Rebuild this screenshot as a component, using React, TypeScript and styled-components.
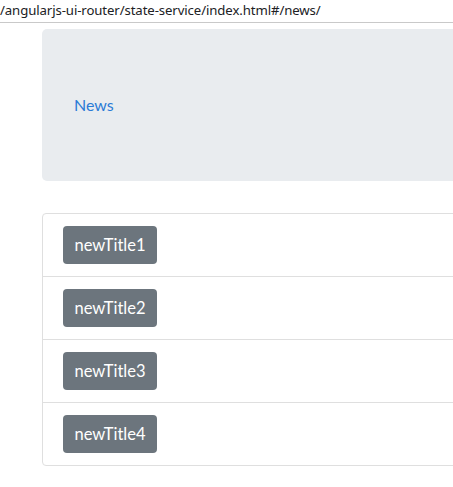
import React from "react";
import styled, { createGlobalStyle } from "styled-components";

const Global = createGlobalStyle`
  html, body { margin: 0; padding: 0; background: #fff; overflow: hidden; }
  body { font-family: Lato, "Open Sans", sans-serif; }
`;

const Page = styled.div`
  width: 453px;
  height: 487px;
  overflow: hidden;
  display: flex;
  flex-direction: column;
`;

const AddressBar = styled.div`
  height: 22px;
  flex: none;
  border-bottom: 1px solid #c9c9c9;
  font-family: "Noto Sans", "Open Sans", sans-serif;
  font-size: 13.2px;
  line-height: 20px;
  color: #202124;
  white-space: nowrap;
  padding-left: 0;
  letter-spacing: -0.1px;
`;

const Container = styled.div`
  margin: 6px -40px 0 42px;
  display: flex;
  flex-direction: column;
`;

const Jumbotron = styled.div`
  background: #e9ecef;
  border-radius: 5px;
  padding: 64px 32px;
  margin-bottom: 32px;
`;

const Link = styled.a`
  font-size: 16px;
  line-height: 24px;
  color: #2b7bd6;
  text-decoration: none;
`;

const ListGroup = styled.ul`
  list-style: none;
  margin: 0;
  padding: 0;
  border: 1px solid #dfdfdf;
  border-radius: 4px;
`;

const ListItem = styled.li<{ $last?: boolean }>`
  padding: 12px 20px;
  border-bottom: ${(p) => (p.$last ? "none" : "1px solid #dfdfdf")};
  display: flex;
`;

const Button = styled.button`
  background: #6c757d;
  color: #fff;
  border: none;
  border-radius: 4px;
  width: 94px;
  height: 38px;
  padding: 0;
  font-family: Lato, "Open Sans", sans-serif;
  font-size: 16.5px;
  line-height: 24px;
  cursor: pointer;
`;

const titles = ["newTitle1", "newTitle2", "newTitle3", "newTitle4"];

export default function App() {
  return (
    <Page>
      <Global />
      <AddressBar>/angularjs-ui-router/state-service/index.html#/news/</AddressBar>
      <Container>
        <Jumbotron>
          <Link href="#">News</Link>
        </Jumbotron>
        <ListGroup>
          {titles.map((t, i) => (
            <ListItem key={t} $last={i === titles.length - 1}>
              <Button>{t}</Button>
            </ListItem>
          ))}
        </ListGroup>
      </Container>
    </Page>
  );
}
